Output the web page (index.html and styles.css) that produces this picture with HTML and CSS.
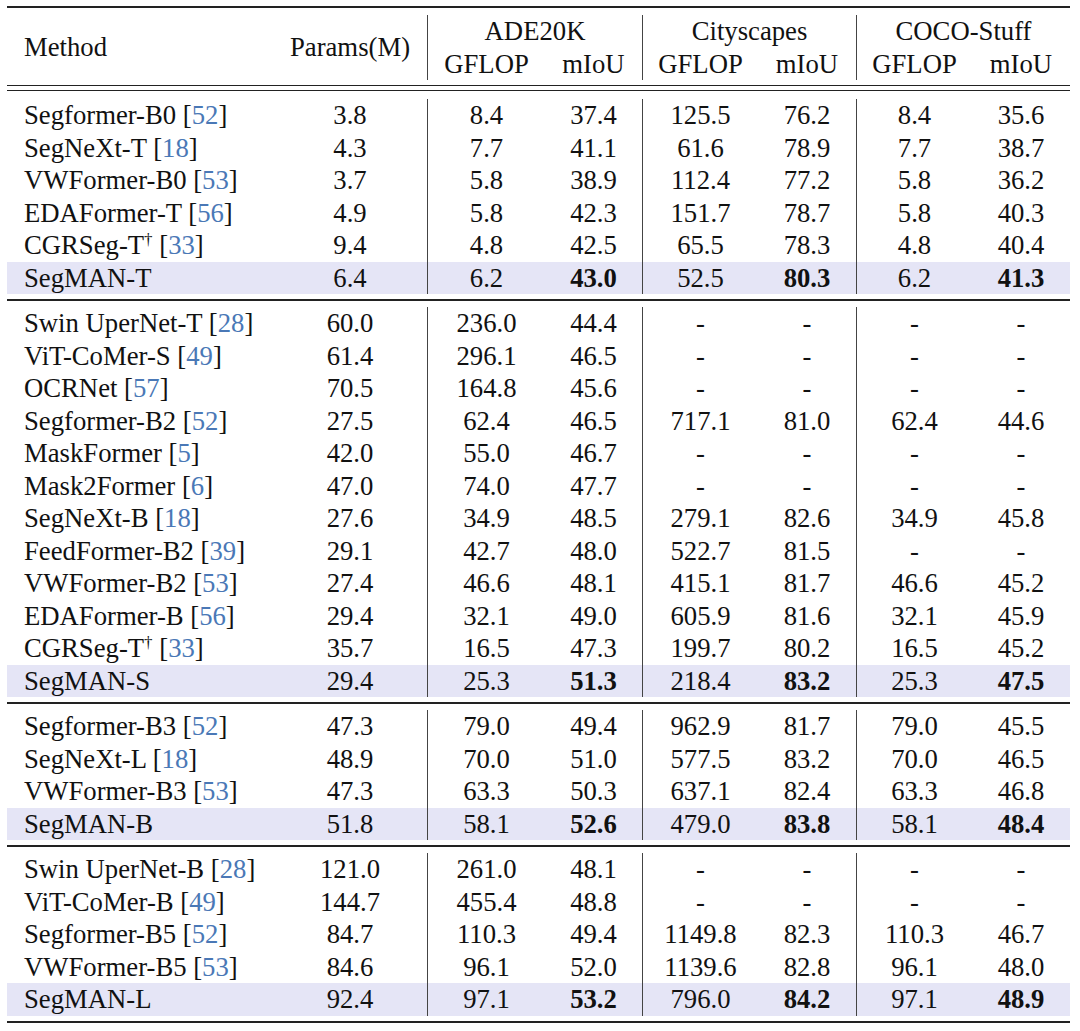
FILE: index.html
```html
<!DOCTYPE html>
<html>
<head>
<meta charset="utf-8">
<link rel="stylesheet" href="styles.css">
</head>
<body>
<div class="table">
  <div class="rule thick top"></div>
  <div class="head">
    <div class="h-method">Method</div>
    <div class="h-params">Params(M)</div>
    <div class="h-group v ade">ADE20K</div>
    <div class="h-group v city">Cityscapes</div>
    <div class="h-group v coco">COCO-Stuff</div>
    <div class="h-sub v c3">GFLOP</div>
    <div class="h-sub c4">mIoU</div>
    <div class="h-sub v c5">GFLOP</div>
    <div class="h-sub c6">mIoU</div>
    <div class="h-sub v c7">GFLOP</div>
    <div class="h-sub c8">mIoU</div>
  </div>
  <div class="rule thin first"></div>
  <div class="rule thin second"></div>

  <div class="section">
    <div class="row"><div class="m">Segformer-B0 <span class="cite">[<span>52</span>]</span></div><div>3.8</div><div class="v">8.4</div><div>37.4</div><div class="v">125.5</div><div>76.2</div><div class="v">8.4</div><div>35.6</div></div>
    <div class="row"><div class="m">SegNeXt-T <span class="cite">[<span>18</span>]</span></div><div>4.3</div><div class="v">7.7</div><div>41.1</div><div class="v">61.6</div><div>78.9</div><div class="v">7.7</div><div>38.7</div></div>
    <div class="row"><div class="m">VWFormer-B0 <span class="cite">[<span>53</span>]</span></div><div>3.7</div><div class="v">5.8</div><div>38.9</div><div class="v">112.4</div><div>77.2</div><div class="v">5.8</div><div>36.2</div></div>
    <div class="row"><div class="m">EDAFormer-T <span class="cite">[<span>56</span>]</span></div><div>4.9</div><div class="v">5.8</div><div>42.3</div><div class="v">151.7</div><div>78.7</div><div class="v">5.8</div><div>40.3</div></div>
    <div class="row"><div class="m">CGRSeg-T<sup>†</sup> <span class="cite">[<span>33</span>]</span></div><div>9.4</div><div class="v">4.8</div><div>42.5</div><div class="v">65.5</div><div>78.3</div><div class="v">4.8</div><div>40.4</div></div>
    <div class="row hl"><div class="m">SegMAN-T</div><div>6.4</div><div class="v">6.2</div><div class="b">43.0</div><div class="v">52.5</div><div class="b">80.3</div><div class="v">6.2</div><div class="b">41.3</div></div>
  </div>
  <div class="rule thick sep"></div>

  <div class="section">
    <div class="row"><div class="m">Swin UperNet-T <span class="cite">[<span>28</span>]</span></div><div>60.0</div><div class="v">236.0</div><div>44.4</div><div class="v">-</div><div>-</div><div class="v">-</div><div>-</div></div>
    <div class="row"><div class="m">ViT-CoMer-S <span class="cite">[<span>49</span>]</span></div><div>61.4</div><div class="v">296.1</div><div>46.5</div><div class="v">-</div><div>-</div><div class="v">-</div><div>-</div></div>
    <div class="row"><div class="m">OCRNet <span class="cite">[<span>57</span>]</span></div><div>70.5</div><div class="v">164.8</div><div>45.6</div><div class="v">-</div><div>-</div><div class="v">-</div><div>-</div></div>
    <div class="row"><div class="m">Segformer-B2 <span class="cite">[<span>52</span>]</span></div><div>27.5</div><div class="v">62.4</div><div>46.5</div><div class="v">717.1</div><div>81.0</div><div class="v">62.4</div><div>44.6</div></div>
    <div class="row"><div class="m">MaskFormer <span class="cite">[<span>5</span>]</span></div><div>42.0</div><div class="v">55.0</div><div>46.7</div><div class="v">-</div><div>-</div><div class="v">-</div><div>-</div></div>
    <div class="row"><div class="m">Mask2Former <span class="cite">[<span>6</span>]</span></div><div>47.0</div><div class="v">74.0</div><div>47.7</div><div class="v">-</div><div>-</div><div class="v">-</div><div>-</div></div>
    <div class="row"><div class="m">SegNeXt-B <span class="cite">[<span>18</span>]</span></div><div>27.6</div><div class="v">34.9</div><div>48.5</div><div class="v">279.1</div><div>82.6</div><div class="v">34.9</div><div>45.8</div></div>
    <div class="row"><div class="m">FeedFormer-B2 <span class="cite">[<span>39</span>]</span></div><div>29.1</div><div class="v">42.7</div><div>48.0</div><div class="v">522.7</div><div>81.5</div><div class="v">-</div><div>-</div></div>
    <div class="row"><div class="m">VWFormer-B2 <span class="cite">[<span>53</span>]</span></div><div>27.4</div><div class="v">46.6</div><div>48.1</div><div class="v">415.1</div><div>81.7</div><div class="v">46.6</div><div>45.2</div></div>
    <div class="row"><div class="m">EDAFormer-B <span class="cite">[<span>56</span>]</span></div><div>29.4</div><div class="v">32.1</div><div>49.0</div><div class="v">605.9</div><div>81.6</div><div class="v">32.1</div><div>45.9</div></div>
    <div class="row"><div class="m">CGRSeg-T<sup>†</sup> <span class="cite">[<span>33</span>]</span></div><div>35.7</div><div class="v">16.5</div><div>47.3</div><div class="v">199.7</div><div>80.2</div><div class="v">16.5</div><div>45.2</div></div>
    <div class="row hl"><div class="m">SegMAN-S</div><div>29.4</div><div class="v">25.3</div><div class="b">51.3</div><div class="v">218.4</div><div class="b">83.2</div><div class="v">25.3</div><div class="b">47.5</div></div>
  </div>
  <div class="rule thick sep"></div>

  <div class="section">
    <div class="row"><div class="m">Segformer-B3 <span class="cite">[<span>52</span>]</span></div><div>47.3</div><div class="v">79.0</div><div>49.4</div><div class="v">962.9</div><div>81.7</div><div class="v">79.0</div><div>45.5</div></div>
    <div class="row"><div class="m">SegNeXt-L <span class="cite">[<span>18</span>]</span></div><div>48.9</div><div class="v">70.0</div><div>51.0</div><div class="v">577.5</div><div>83.2</div><div class="v">70.0</div><div>46.5</div></div>
    <div class="row"><div class="m">VWFormer-B3 <span class="cite">[<span>53</span>]</span></div><div>47.3</div><div class="v">63.3</div><div>50.3</div><div class="v">637.1</div><div>82.4</div><div class="v">63.3</div><div>46.8</div></div>
    <div class="row hl"><div class="m">SegMAN-B</div><div>51.8</div><div class="v">58.1</div><div class="b">52.6</div><div class="v">479.0</div><div class="b">83.8</div><div class="v">58.1</div><div class="b">48.4</div></div>
  </div>
  <div class="rule thick sep"></div>

  <div class="section">
    <div class="row"><div class="m">Swin UperNet-B <span class="cite">[<span>28</span>]</span></div><div>121.0</div><div class="v">261.0</div><div>48.1</div><div class="v">-</div><div>-</div><div class="v">-</div><div>-</div></div>
    <div class="row"><div class="m">ViT-CoMer-B <span class="cite">[<span>49</span>]</span></div><div>144.7</div><div class="v">455.4</div><div>48.8</div><div class="v">-</div><div>-</div><div class="v">-</div><div>-</div></div>
    <div class="row"><div class="m">Segformer-B5 <span class="cite">[<span>52</span>]</span></div><div>84.7</div><div class="v">110.3</div><div>49.4</div><div class="v">1149.8</div><div>82.3</div><div class="v">110.3</div><div>46.7</div></div>
    <div class="row"><div class="m">VWFormer-B5 <span class="cite">[<span>53</span>]</span></div><div>84.6</div><div class="v">96.1</div><div>52.0</div><div class="v">1139.6</div><div>82.8</div><div class="v">96.1</div><div>48.0</div></div>
    <div class="row hl"><div class="m">SegMAN-L</div><div>92.4</div><div class="v">97.1</div><div class="b">53.2</div><div class="v">796.0</div><div class="b">84.2</div><div class="v">97.1</div><div class="b">48.9</div></div>
  </div>
  <div class="rule thick bottom"></div>
</div>
</body>
</html>
```

FILE: styles.css
```css
html, body {
  margin: 0;
  padding: 0;
  background: #ffffff;
}

body {
  font-family: "Liberation Serif", "Times New Roman", serif;
  font-size: 26.7px;
  color: #111111;
}

.table {
  width: 1063px;
  margin-left: 7px;
  padding-top: 6px;
}

.rule {
  background: #222222;
}

.rule.thick {
  height: 2px;
}

.rule.thin {
  height: 1px;
}

.rule.first {
  margin-top: 0;
}

.rule.second {
  margin-top: 4px;
  margin-bottom: 8px;
}

.rule.sep {
  margin-top: 5px;
  margin-bottom: 6px;
}

.rule.bottom {
  margin-top: 5px;
}

.head,
.row {
  display: grid;
  grid-template-columns: 266px 154px 118px 97px 116px 98px 116px 98px;
}

.head {
  grid-template-rows: 32.5px 32.5px;
  padding-top: 7px;
  padding-bottom: 5px;
  line-height: 32.5px;
  text-align: center;
}

.h-method {
  grid-column: 1;
  grid-row: 1 / 3;
  align-self: center;
  text-align: left;
  padding-left: 17px;
}

.h-params {
  grid-column: 2;
  grid-row: 1 / 3;
  align-self: center;
}

.h-group.ade { grid-column: 3 / 5; grid-row: 1; }
.h-group.city { grid-column: 5 / 7; grid-row: 1; }
.h-group.coco { grid-column: 7 / 9; grid-row: 1; }

.h-sub { grid-row: 2; }
.h-sub.c3 { grid-column: 3; }
.h-sub.c4 { grid-column: 4; }
.h-sub.c5 { grid-column: 5; }
.h-sub.c6 { grid-column: 6; }
.h-sub.c7 { grid-column: 7; }
.h-sub.c8 { grid-column: 8; }

.v {
  border-left: 1px solid #444444;
}

.row {
  height: 32.5px;
  line-height: 32.5px;
  text-align: center;
  white-space: nowrap;
}

.row.hl {
  background: #e5e5f6;
}

.row .m {
  text-align: left;
  padding-left: 17px;
}

.b {
  font-weight: bold;
}

.cite span {
  color: #4a78b6;
}

sup {
  font-size: 17px;
  line-height: 0;
  vertical-align: 0.55em;
}
```
